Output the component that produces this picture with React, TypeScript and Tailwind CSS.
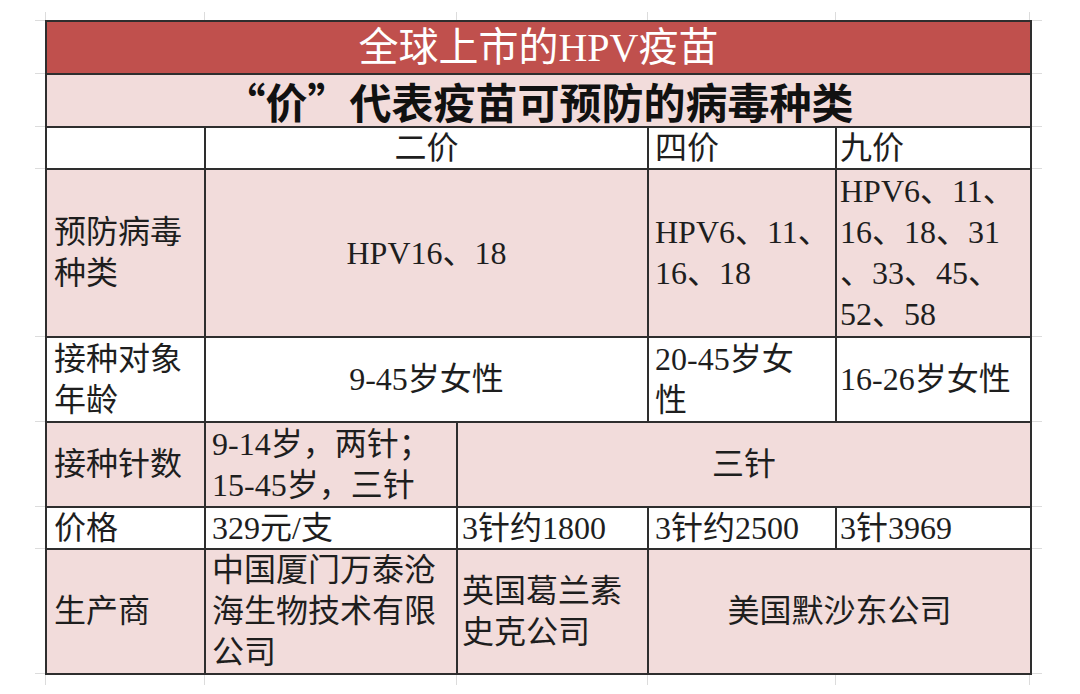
import React from 'react';

const cellFont = {
  fontFamily: "'Liberation Serif', 'Noto Sans CJK SC', serif",
};

// line-to-line distances used by the faint spreadsheet ticks
const ROW_STEPS = [53, 53, 42, 168, 85, 85, 42, 125];

interface CellProps {
  children?: React.ReactNode;
  className?: string;
}

const Cell: React.FC<CellProps> = ({ children, className = '' }) => (
  <div
    className={`flex items-center text-[32px] leading-[41px] text-[#1e1e1e] ${className}`}
    style={cellFont}
  >
    {children}
  </div>
);

const SideTicks: React.FC<{ align: 'start' | 'end' }> = ({ align }) => (
  <div className={`flex w-[45px] flex-col pt-[20px] ${align === 'end' ? 'items-end' : 'items-start'}`}>
    {ROW_STEPS.map((h, i) => (
      <div key={i} className="w-[10px] border-t border-[#dcdcdc]" style={{ height: h }} />
    ))}
    <div className="w-[10px] border-t border-[#dcdcdc]" />
  </div>
);

const ColumnTicks: React.FC<{ className?: string }> = ({ className = '' }) => (
  <div className={`flex ${className}`}>
    <div className="w-[159px] border-l border-[#dcdcdc]" />
    <div className="w-[252px] border-l border-[#dcdcdc]" />
    <div className="w-[191px] border-l border-[#dcdcdc]" />
    <div className="w-[188px] border-l border-[#dcdcdc]" />
    <div className="w-[195px] border-l border-r border-[#dcdcdc]" />
  </div>
);

export default function App() {
  return (
    <div className="h-[694px] w-[1080px] overflow-hidden bg-white">
      <div className="flex">
        <SideTicks align="end" />
        <div className="flex flex-col pt-[12px]">
          <ColumnTicks className="h-[8px]" />
          <div className="grid grid-cols-[157px_250px_189px_186px_193px] grid-rows-[51px_51px_40px_166px_83px_83px_40px_123px] gap-[2px] bg-[#2e2e2e] p-[2px]">
            {/* title rows */}
            <div
              className="col-span-5 flex items-center justify-center bg-[#c0504d] text-[40px] leading-none text-white"
              style={cellFont}
            >
              全球上市的HPV疫苗
            </div>
            <div
              className="col-span-5 flex items-center justify-center bg-[#f2dcdb] text-[42px] font-bold leading-none text-[#111]"
              style={{ fontFamily: "'Noto Sans CJK SC', sans-serif" }}
            >
              “价”代表疫苗可预防的病毒种类
            </div>

            {/* header */}
            <Cell className="bg-white" />
            <Cell className="col-span-2 justify-center bg-white">二价</Cell>
            <Cell className="bg-white pl-[6px]">四价</Cell>
            <Cell className="bg-white pl-[3px]">九价</Cell>

            {/* 预防病毒种类 */}
            <Cell className="bg-[#f2dcdb] pl-[7px] leading-[38px]">
              <span>预防病毒<br />种类</span>
            </Cell>
            <Cell className="col-span-2 justify-center bg-[#f2dcdb]">HPV16、18</Cell>
            <Cell className="bg-[#f2dcdb] pl-[6px]">
              <span>HPV6、11、<br />16、18</span>
            </Cell>
            <Cell className="bg-[#f2dcdb] pl-[3px]">
              <span>HPV6、11、<br />16、18、31<br />、33、45、<br />52、58</span>
            </Cell>

            {/* 接种对象年龄 */}
            <Cell className="bg-white pl-[7px]">
              <span>接种对象<br />年龄</span>
            </Cell>
            <Cell className="col-span-2 justify-center bg-white">9-45岁女性</Cell>
            <Cell className="bg-white pl-[6px]">
              <span>20-45岁女<br />性</span>
            </Cell>
            <Cell className="bg-white pl-[3px]">16-26岁女性</Cell>

            {/* 接种针数 */}
            <Cell className="bg-[#f2dcdb] pl-[7px]">接种针数</Cell>
            <Cell className="bg-[#f2dcdb] pl-[6px] leading-[39px]">
              <span>9-14岁，两针；<br />15-45岁，三针</span>
            </Cell>
            <Cell className="col-span-3 justify-center bg-[#f2dcdb]">三针</Cell>

            {/* 价格 */}
            <Cell className="bg-white pl-[7px]">价格</Cell>
            <Cell className="bg-white pl-[6px]">329元/支</Cell>
            <Cell className="bg-white pl-[4px]">3针约1800</Cell>
            <Cell className="bg-white pl-[6px]">3针约2500</Cell>
            <Cell className="bg-white pl-[3px]">3针3969</Cell>

            {/* 生产商 */}
            <Cell className="bg-[#f2dcdb] pl-[7px]">生产商</Cell>
            <Cell className="bg-[#f2dcdb] pl-[6px]">
              <span>中国厦门万泰沧<br />海生物技术有限<br />公司</span>
            </Cell>
            <Cell className="bg-[#f2dcdb] pl-[4px]">
              <span>英国葛兰素<br />史克公司</span>
            </Cell>
            <Cell className="col-span-2 justify-center bg-[#f2dcdb]">美国默沙东公司</Cell>
          </div>
          <ColumnTicks className="h-[10px]" />
        </div>
        <SideTicks align="start" />
      </div>
    </div>
  );
}
